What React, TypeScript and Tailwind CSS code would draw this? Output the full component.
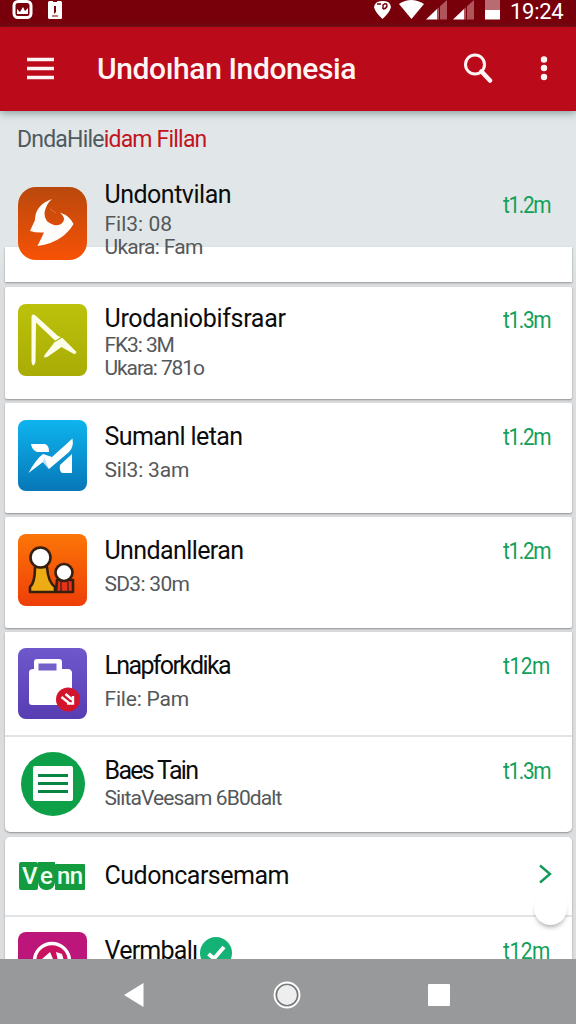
import type { ReactNode } from "react";

type Item = {
  title: string;
  titleClass: string;
  lines: { text: string; className: string }[];
  size: string;
  icon: ReactNode;
  iconTop: string;
  textTop: string;
  sizeTop: string;
  height: string;
};

const FlameIcon = () => (
  <svg width="69" height="73" viewBox="0 0 69 73">
    <defs>
      <linearGradient id="flame" x1="0" y1="0" x2="0" y2="1">
        <stop offset="0" stopColor="#b9480c" />
        <stop offset="1" stopColor="#f75205" />
      </linearGradient>
    </defs>
    <rect width="69" height="73" rx="18" fill="url(#flame)" />
    <path
      d="M34 12C22 16 17 24 17 33L12 44Q18 46 26 45.500L19.500 59Q34 57 43 50.500Q51 45 55.500 37Q52 29 42 25.500Q48 31 45 35Q42 39 36 38Q26 35 26.500 26Q28 17 34 12Z"
      fill="#fffdfa"
    />
    <path d="M32 22L38 26" stroke="#e0763a" strokeWidth="1" />
  </svg>
);

const ArrowIcon = () => (
  <svg width="69" height="72" viewBox="0 0 69 72">
    <defs>
      <linearGradient id="lime" x1="0" y1="0" x2="0" y2="1">
        <stop offset="0" stopColor="#bcc20b" />
        <stop offset="1" stopColor="#a9ac06" />
      </linearGradient>
    </defs>
    <rect width="69" height="72" rx="8" fill="url(#lime)" />
    <path
      d="M13.500 13Q13.500 9 17.500 11.500L40 32L44 33.500L58 47.500Q59 50 56 50L43.500 43L30 52.500Q24 55 27 50.500L37.500 37L18 18.500L17.500 58Q15 65 13.500 58Z"
      fill="#fdfeea"
    />
    <path d="M37 37.500L44 33" stroke="#b3b80a" strokeWidth="1.200" />
  </svg>
);

const WingIcon = () => (
  <svg width="69" height="71" viewBox="0 0 69 71">
    <defs>
      <linearGradient id="sky" x1="0" y1="0" x2="0" y2="1">
        <stop offset="0" stopColor="#0eb4ee" />
        <stop offset="1" stopColor="#0777b8" />
      </linearGradient>
    </defs>
    <rect width="69" height="71" rx="8" fill="url(#sky)" />
    <path d="M13 24H27Q31 25 31 32H19Q14 30 13 24Z" fill="#fff" />
    <path d="M10.500 53Q18 39 25 34L34 37L54.500 18.500Q56 27 51 32L31 49L25 42Z" fill="#fff" />
    <path d="M25 42L26 37L31 49Z" fill="#bcdff2" />
    <path d="M42 45L54 34V53H44Q41 51 42 45Z" fill="#fff" />
  </svg>
);

const PeopleIcon = () => (
  <svg width="69" height="72" viewBox="0 0 69 72">
    <defs>
      <linearGradient id="orange" x1="0" y1="0" x2="0" y2="1">
        <stop offset="0" stopColor="#fb7507" />
        <stop offset="1" stopColor="#ee3e08" />
      </linearGradient>
    </defs>
    <rect width="69" height="72" rx="8" fill="url(#orange)" />
    <g stroke="#35200f" strokeWidth="2.600" strokeLinejoin="round">
      <path d="M17 33Q17 49 12 53V58H37V53Q30 48 29 33Z" fill="#edac14" />
      <path d="M39 46H55V58H38Z" fill="#e8331a" />
      <path d="M43 48V57M50 48V57" strokeWidth="1.200" />
      <circle cx="22.500" cy="23.500" r="10" fill="#fff" />
      <circle cx="46" cy="38.500" r="8.500" fill="#fff" />
    </g>
  </svg>
);

const BagIcon = () => (
  <svg width="69" height="71" viewBox="0 0 69 71">
    <defs>
      <linearGradient id="violet" x1="0" y1="0" x2="0" y2="1">
        <stop offset="0" stopColor="#6e58cc" />
        <stop offset="1" stopColor="#583db2" />
      </linearGradient>
    </defs>
    <rect width="69" height="71" rx="8" fill="url(#violet)" />
    <path
      d="M19 11H41Q44 11 44 14V21H51Q54 22 54 25V54Q54 57 51 57H14Q11 57 11 54V24Q11 21 16 21V14Q16 11 19 11Z"
      fill="#fff"
    />
    <rect x="20.500" y="15.500" width="18" height="7" fill="#7561c9" />
    <circle cx="50" cy="51.500" r="12" fill="#d3152c" />
    <path d="M43.500 49L51 55M47.500 46L54 51.500M55 48V55.500H49" stroke="#fff" strokeWidth="2.400" fill="none" />
  </svg>
);

const ListIcon = () => (
  <svg className="ml-[3px]" width="64" height="64" viewBox="0 0 64 64">
    <circle cx="32" cy="32" r="32" fill="#0da049" />
    <rect x="12" y="14" width="40" height="35" rx="2" fill="#fff" />
    <path d="M17 23.500H47M17 31.500H47M17 39.500H47" stroke="#088541" strokeWidth="3.200" />
  </svg>
);

const PinkIcon = () => (
  <svg width="69" height="69" viewBox="0 0 69 69">
    <rect width="69" height="69" rx="8" fill="#bd167a" />
    <circle cx="34" cy="29" r="17.500" fill="#cb1260" stroke="#fff" strokeWidth="3.500" />
    <path d="M24 27L32 20L35 27V29H24ZM38 20L44 22L46 29H40Z" fill="#fff" />
  </svg>
);

const firstItem: Item = {
  title: "Undontvilan",
  titleClass: "tracking-[-0.5px]",
  lines: [
    { text: "Fil3: 08", className: "mt-[3px] tracking-[0px]" },
    { text: "Ukara: Fam", className: "tracking-[-0.7px]" },
  ],
  size: "t1.2m",
  icon: <FlameIcon />,
  iconTop: "mt-[20px]",
  textTop: "mt-[13px]",
  sizeTop: "mt-[23px]",
  height: "h-[115px]",
};

const items: Item[] = [
  {
    title: "Urodaniobifsraar",
    titleClass: "tracking-[-0.3px]",
    lines: [
      { text: "FK3: 3M", className: "tracking-[-1.1px]" },
      { text: "Ukara: 781o", className: "tracking-[-1.1px]" },
    ],
    size: "t1.3m",
    icon: <ArrowIcon />,
    iconTop: "mt-[17px]",
    textTop: "mt-[17px]",
    sizeTop: "mt-[18px]",
    height: "h-[112px]",
  },
  {
    title: "Sumanl letan",
    titleClass: "tracking-[-0.6px]",
    lines: [{ text: "Sil3: 3am", className: "mt-[7px] tracking-[-0.2px]" }],
    size: "t1.2m",
    icon: <WingIcon />,
    iconTop: "mt-[17px]",
    textTop: "mt-[19px]",
    sizeTop: "mt-[19px]",
    height: "h-[110px]",
  },
  {
    title: "Unndanlleran",
    titleClass: "tracking-[-0.6px]",
    lines: [{ text: "SD3: 30m", className: "mt-[7px] tracking-[-0.7px]" }],
    size: "t1.2m",
    icon: <PeopleIcon />,
    iconTop: "mt-[17px]",
    textTop: "mt-[19px]",
    sizeTop: "mt-[19px]",
    height: "h-[111px]",
  },
];

const groupedItems: Item[] = [
  {
    title: "Lnapforkdika",
    titleClass: "tracking-[-1.65px]",
    lines: [{ text: "File: Pam", className: "mt-[7px] tracking-[-0.2px]" }],
    size: "t12m",
    icon: <BagIcon />,
    iconTop: "mt-[16px]",
    textTop: "mt-[19px]",
    sizeTop: "mt-[19px]",
    height: "h-[103px] border-b-2 border-[#e2e3e4] box-content",
  },
  {
    title: "Baes Tain",
    titleClass: "tracking-[-1.7px]",
    lines: [{ text: "SiıtaVeesam 6B0dalt", className: "mt-px tracking-[-0.9px]" }],
    size: "t1.3m",
    icon: <ListIcon />,
    iconTop: "mt-[15px]",
    textTop: "mt-[19px]",
    sizeTop: "mt-[19px]",
    height: "h-[95px]",
  },
];

const Size = ({ value, className }: { value: string; className: string }) => (
  <p
    className={`w-[48px] shrink-0 origin-left scale-x-[0.87] whitespace-nowrap text-[24px] leading-[30px] text-[#12a05a] ${
      value.includes(".") ? "tracking-[-1.6px]" : "tracking-[-0.5px]"
    } ${className}`}
  >
    {value}
  </p>
);

const Row = ({ item }: { item: Item }) => (
  <div className={`relative flex pl-[13px] pr-[21px] ${item.height}`}>
    <div className={`w-[69px] shrink-0 ${item.iconTop}`}>{item.icon}</div>
    <div className={`ml-[17.5px] flex-1 whitespace-nowrap ${item.textTop}`}>
      <p className={`text-[25px] leading-[30px] text-[#0c0c0c] ${item.titleClass}`}>{item.title}</p>
      {item.lines.map((line) => (
        <p key={line.text} className={`text-[21px] leading-[23px] text-[#55585a] ${line.className}`}>
          {line.text}
        </p>
      ))}
    </div>
    <Size value={item.size} className={item.sizeTop} />
  </div>
);

const StatusBar = () => (
  <div className="flex h-[27px] shrink-0 items-start bg-[#78000b] text-white">
    <svg className="ml-[12px] shrink-0" width="21" height="20" viewBox="0 0 21 20">
      <rect x="2" y="1.500" width="17" height="16" rx="4" fill="none" stroke="#fff" strokeWidth="3" />
      <path d="M5 14V9L8 12L11 7L13 11L16 8V14Z" fill="#fff" />
    </svg>
    <svg className="ml-[14px] shrink-0" width="16" height="20" viewBox="0 0 16 20">
      <rect x="1" y="1" width="14" height="18" rx="1.500" fill="#fff" />
      <path d="M6 0H10V2H6ZM7 6H9V12L7 14Z" fill="#78000b" />
      <path d="M7.500 6V12M5 16H11" stroke="#78000b" strokeWidth="1" />
    </svg>
    <svg className="ml-[310px] shrink-0" width="19" height="20" viewBox="0 0 19 20">
      <path d="M1 7Q2 1 9 1Q17 0 18 7Q17 12 9.500 19Q2 12 1 7Z" fill="#fff" />
      <path d="M4 4H8M10 9V5Q14 2 14 6Q13 9 10 9" stroke="#78000b" strokeWidth="1.500" fill="none" />
    </svg>
    <svg className="ml-[7px] shrink-0" width="25" height="20" viewBox="0 0 25 20">
      <path d="M0 4Q12 -4 25 4L12.500 19Z" fill="#fff" />
    </svg>
    {[0, 1].map((n) => (
      <svg
        key={n}
        className={n === 0 ? "ml-[2px] shrink-0" : "ml-[6px] shrink-0"}
        width="21"
        height="20"
        viewBox="0 0 21 20"
      >
        <path d="M11 9L21 0V19.500H11Z" fill="#b0555c" />
        <path d="M13.500 6V19.500" stroke="#78000b" />
        <path d="M0 19.500L11 9V19.500Z" fill="#fff" />
      </svg>
    ))}
    <svg className="ml-[11px] shrink-0" width="15" height="20" viewBox="0 0 15 20">
      <rect width="15" height="10" fill="#b86b70" />
      <rect y="10" width="15" height="9.500" fill="#fff" />
    </svg>
    <span className="ml-[10px] whitespace-nowrap text-[22px] leading-[23px] tracking-[-0.3px]">19:24</span>
  </div>
);

const AppBar = () => (
  <div className="relative z-10 flex h-[84px] shrink-0 items-center bg-[#bb0a19] text-[#fff4f4] shadow-[0_2px_8px_rgba(60,90,90,0.55)]">
    <svg className="ml-[27px]" width="27" height="24" viewBox="0 0 27 24">
      <path d="M0 2.500H27M0 11.500H27M0 20.500H27" stroke="currentColor" strokeWidth="3.500" />
    </svg>
    <h1 className="ml-[43px] flex-1 whitespace-nowrap text-[30px] font-medium leading-[36px] tracking-[-0.4px]">
      Undoıhan Indonesia
    </h1>
    <svg className="mr-[47px] mb-[2px]" width="30" height="30" viewBox="0 0 30 30" fill="none" stroke="currentColor">
      <circle cx="12" cy="11.500" r="9.500" strokeWidth="3" />
      <path d="M18.500 18.500L27 27.500" strokeWidth="4.500" strokeLinecap="round" />
    </svg>
    <svg className="mr-[28px]" width="8" height="28" viewBox="0 0 8 28" fill="currentColor">
      <circle cx="4" cy="4.500" r="3.200" />
      <circle cx="4" cy="13" r="3.200" />
      <circle cx="4" cy="22" r="3.200" />
    </svg>
  </div>
);

const VennLogo = () => (
  <div className="flex h-[28px] w-[66px] items-start text-[24px] font-medium text-[#effff0]">
    <span className="h-[28px] w-[19px] rounded-[2px] bg-[#129b3f] pl-[3px] leading-[28px]">V</span>
    <span className="h-[28px] w-[17px] rounded-b-[8px] bg-[#129b3f] pl-[2px] leading-[28px]">e</span>
    <span className="mt-[2px] h-[26px] w-[30px] rounded-[1px] bg-[#129b3f] pl-[2px] leading-[24px] tracking-[-0.5px]">
      nn
    </span>
  </div>
);

const NavBar = () => (
  <div className="relative z-20 flex h-[65px] shrink-0 items-center bg-[#97999b] pt-[6px]">
    <svg className="ml-[123px]" width="21" height="26" viewBox="0 0 21 26">
      <path d="M1 13L20.500 1V25Z" fill="#fff" />
    </svg>
    <svg className="ml-[129px]" width="28" height="28" viewBox="0 0 28 28">
      <circle cx="14" cy="14" r="12.500" fill="none" stroke="#fff" strokeWidth="1.800" />
      <circle cx="14" cy="14" r="10.500" fill="#eeeeee" stroke="#717375" strokeWidth="1.200" />
    </svg>
    <div className="ml-[127px] size-[22px] rounded-[1px] bg-white" />
  </div>
);

export default function App() {
  return (
    <div className="flex h-[1024px] w-[576px] flex-col overflow-hidden bg-[#e1e7e8] font-['Roboto',sans-serif]">
      <StatusBar />
      <AppBar />

      <main className="h-[848px] shrink-0 overflow-hidden bg-[linear-gradient(#e1e7e8_0px,#e1e7e8_140px,#dcdddf_180px,#dcdddf_100%)]">
        <h2 className="h-[56px] whitespace-nowrap pl-[17px] pt-[14px] text-[23px] leading-[30px] text-[#c21420]">
          <span className="tracking-[-0.8px] text-[#4f5a60]">DndaHile</span>
          <span className="tracking-[-0.8px]">idam Fillan</span>
        </h2>

        {/* first entry sits partly on top of its card */}
        <div className="relative ml-[5px] mr-[4px]">
          <div className="absolute inset-x-0 top-[80px] h-[35px] bg-white shadow-[0_1px_2px_rgba(0,0,0,0.35)]" />
          <Row item={firstItem} />
        </div>

        <div className="ml-[5px] mr-[4px] mt-[5px] flex flex-col gap-[4px]">
          {items.map((item) => (
            <div key={item.title} className="rounded-[2px] bg-white shadow-[0_1px_2px_rgba(0,0,0,0.35)]">
              <Row item={item} />
            </div>
          ))}

          <div className="rounded-b-[5px] bg-white shadow-[0_1px_2px_rgba(0,0,0,0.35)]">
            {groupedItems.map((item) => (
              <Row key={item.title} item={item} />
            ))}
          </div>

          <div className="relative mt-px rounded-t-[5px] bg-white shadow-[0_1px_2px_rgba(0,0,0,0.35)]">
            <div className="flex h-[80px] items-center border-b-2 border-[#e2e3e4] pl-[14px]">
              <VennLogo />
              <p className="ml-[19.5px] flex-1 whitespace-nowrap text-[25px] leading-[30px] tracking-[-0.5px] text-[#0c0c0c]">
                Cudoncarsemam
              </p>
            </div>
            {/* lower half of the floating button */}
            <div className="absolute right-[5px] top-[55px] size-[33px] rounded-full bg-white shadow-[0_4px_5px_-2px_rgba(0,0,0,0.35)]" />
            <div className="absolute right-0 top-0 h-[62px] w-[48px] rounded-tr-[5px] bg-white" />
            <svg className="absolute right-[20px] top-[27px]" width="14" height="20" viewBox="0 0 14 20">
              <path d="M2 1.500L12 10L2 18.500" fill="none" stroke="#14995a" strokeWidth="2.400" />
            </svg>
            <div className="flex h-[60px] pl-[13px] pr-[21px]">
              <div className="mt-[15px] w-[69px]">
                <PinkIcon />
              </div>
              <p className="ml-[17.5px] mt-[19px] whitespace-nowrap text-[25px] leading-[30px] tracking-[-0.75px] text-[#0c0c0c]">
                Vermbalı
              </p>
              <svg className="ml-[3px] mt-[20px]" width="32" height="32" viewBox="0 0 32 32">
                <circle cx="16" cy="16" r="16" fill="#14b275" />
                <path d="M8.500 17L14 21.500L24 10" fill="none" stroke="#fff" strokeWidth="4" />
              </svg>
              <div className="flex-1" />
              <Size value="t12m" className="mt-[19px]" />
            </div>
          </div>
        </div>
      </main>

      <NavBar />
    </div>
  );
}
